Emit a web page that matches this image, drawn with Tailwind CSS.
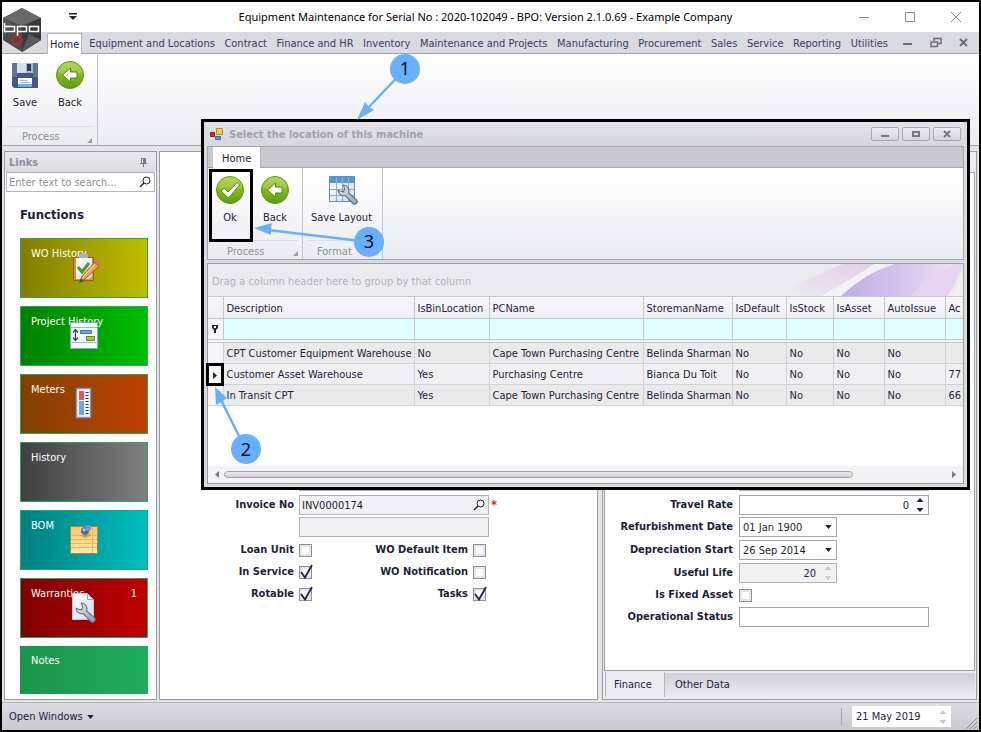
<!DOCTYPE html>
<html lang="en">
<head>
    <meta charset="UTF-8">
    <meta name="viewport" content="width=device-width, initial-scale=1.0">
    <title>Equipment Maintenance - BPO</title>
    <script src="https://cdn.jsdelivr.net/npm/@tailwindcss/browser@4"></script>
</head>
<body class="relative flex flex-col min-h-screen overflow-hidden border-2 border-black bg-[#e4e4e9] font-['DejaVu_Sans_Condensed','DejaVu_Sans',sans-serif] text-[11px] leading-[14px] text-[#1e1e3a]">

    <!-- Shared icons -->
    <svg class="absolute h-0 w-0">
        <defs>
            <linearGradient id="green" x1="0" y1="0" x2="0" y2="1">
                <stop offset="0" stop-color="#a3d03c"/><stop offset="0.5" stop-color="#84bb1c"/><stop offset="1" stop-color="#5d9b10"/>
            </linearGradient>
            <linearGradient id="paper" x1="0" y1="0" x2="1" y2="1">
                <stop offset="0" stop-color="#ffffff"/><stop offset="1" stop-color="#cfdcf0"/>
            </linearGradient>
            <linearGradient id="steel" x1="0" y1="0" x2="1" y2="1">
                <stop offset="0" stop-color="#eef2f6"/><stop offset="1" stop-color="#8d9cb0"/>
            </linearGradient>
            <linearGradient id="note" x1="0" y1="0" x2="0" y2="1">
                <stop offset="0" stop-color="#fbc768"/><stop offset="1" stop-color="#fdebad"/>
            </linearGradient>
        </defs>
        <symbol id="i-save" viewBox="0 0 32 32">
            <path d="M3 4h26v25H5l-2-2z" fill="#45597a"/>
            <path d="M3 4h5v14H3zM24 4h5v14h-5z" fill="#5f7595"/>
            <path d="M8 4h16v10H8z" fill="#a9bbd2"/>
            <path d="M8 4h9v10H8z" fill="#d5dfec"/>
            <path d="M18 5h4v7h-4z" fill="#2c3c59"/>
            <path d="M9 19h14v9H9z" fill="#f4f9fe"/>
            <path d="M9 25h14v3H9z" fill="#63b3ea"/>
            <path d="M11 21.500h7M11 23.500h10" stroke="#9db4d0"/>
        </symbol>
        <symbol id="i-back" viewBox="0 0 32 32">
            <circle cx="16" cy="16" r="13.500" fill="url(#green)" stroke="#5c9413"/>
            <path d="M4 14a12 11 0 0 1 24 0q-12 4-24 0z" fill="#fff" opacity=".15"/>
            <path d="M8.500 16l8-7v4h6.500v6h-6.500v4z" fill="#fff" stroke="#53840f"/>
        </symbol>
        <symbol id="i-ok" viewBox="0 0 32 32">
            <circle cx="16" cy="16" r="13.500" fill="url(#green)" stroke="#5c9413"/>
            <path d="M4 14a12 11 0 0 1 24 0q-12 4-24 0z" fill="#fff" opacity=".15"/>
            <path d="M7 17l3-3 4 4 9-9.500 2.500 2.500L14.500 24z" fill="#fff" stroke="#53840f"/>
        </symbol>
        <symbol id="i-wrench" viewBox="0 0 20 20">
            <path d="M1 6a5.500 5.500 0 0 0 7 5l7 7.500a2.300 2.300 0 0 0 3.500-3.500L11 8.500A5.500 5.500 0 0 0 6 1l1.500 4L6 7.500 3.500 7z" fill="url(#steel)" stroke="#5f6f86"/>
        </symbol>
        <symbol id="i-layout" viewBox="0 0 32 32">
            <path d="M3.500 2.500h25v25h-25z" fill="url(#paper)" stroke="#7089b5"/>
            <path d="M4 3h24v6H4z" fill="#4b9bd8"/>
            <path d="M4 15.500h24M4 21.500h24M10.500 3v24M16.500 3v24M22.500 3v24" stroke="#8fa9d0"/>
            <use href="#i-wrench" x="11" y="10" width="21" height="21"/>
        </symbol>
        <symbol id="i-search" viewBox="0 0 12 12">
            <circle cx="7.500" cy="4.500" r="3.500" fill="none" stroke="currentColor"/>
            <path d="M5 7L1 11" stroke="currentColor" stroke-width="1.400"/>
        </symbol>
        <symbol id="i-spin" viewBox="0 0 8 14">
            <path d="M4 0l3.500 4h-7zM4 14l3.500-4h-7z" fill="currentColor"/>
        </symbol>
        <symbol id="i-down" viewBox="0 0 8 5">
            <path d="M0 0h8L4 5z" fill="currentColor"/>
        </symbol>
        <symbol id="i-check" viewBox="0 0 14 16">
            <path d="M2 8l4 5.500L13 1" fill="none" stroke="#24243f" stroke-width="1.800"/>
        </symbol>
        <symbol id="i-corner" viewBox="0 0 6 6">
            <path d="M6 0v6H0z" fill="#9a9aa4"/>
        </symbol>
    </svg>

    <!-- Title bar -->
    <header class="flex h-[30px] items-center bg-white">
        <button class="ml-[67px] text-black" aria-label="Customize toolbar">
            <svg class="h-2 w-2" viewBox="0 0 8 8"><path d="M0 0h8v1.500H0zM0 3h8L4 7z" fill="#222"/></svg>
        </button>
        <h1 class="flex-1 pl-9 text-center font-['Noto_Sans',sans-serif] text-[11px] font-normal text-black">Equipment Maintenance for Serial No : 2020-102049 - BPO: Version 2.1.0.69 - Example Company</h1>
        <div class="flex items-center gap-[34px] pr-[17px]">
            <button aria-label="Minimize"><svg class="h-3 w-3" viewBox="0 0 12 12"><path d="M1 6.500h10" stroke="#888"/></svg></button>
            <button aria-label="Maximize"><svg class="h-3 w-3" viewBox="0 0 12 12"><path d="M1.500 1.500h9v9h-9z" fill="none" stroke="#888"/></svg></button>
            <button aria-label="Close"><svg class="h-3 w-3" viewBox="0 0 12 12"><path d="M1 1l10 10M11 1L1 11" stroke="#888"/></svg></button>
        </div>
    </header>

    <!-- Ribbon tabs -->
    <nav class="flex h-[22px] items-end border-b border-[#a3a3ad] bg-[#dadae1] pl-[45px] text-[#3c3c5c]">
        <a href="#" class="-mb-px h-[21px] border-x border-t border-[#b5b5be] bg-white px-[2px] pt-1 text-[#1e1e3a]">Home</a>
        <div class="flex h-[21px] flex-1 items-center justify-between pt-[3px] pl-[7px]">
            <a href="#">Equipment and Locations</a>
            <a href="#">Contract</a>
            <a href="#">Finance and HR</a>
            <a href="#">Inventory</a>
            <a href="#">Maintenance and Projects</a>
            <a href="#">Manufacturing</a>
            <a href="#">Procurement</a>
            <a href="#">Sales</a>
            <a href="#">Service</a>
            <a href="#">Reporting</a>
            <a href="#">Utilities</a>
        </div>
        <div class="flex h-[21px] items-center gap-4 pr-[9px] pl-[14px]">
            <button aria-label="Minimize child"><svg class="h-3 w-3" viewBox="0 0 12 12"><path d="M1 7h9" stroke="#6c6c7e" stroke-width="2"/></svg></button>
            <button aria-label="Restore child"><svg class="h-3 w-3" viewBox="0 0 12 12"><path d="M4 4V1.500h7v5H8.500M1 5h6.500v4.500H1z" fill="none" stroke="#6c6c7e" stroke-width="1.500"/></svg></button>
            <button aria-label="Close child"><svg class="h-3 w-3" viewBox="0 0 12 12"><path d="M2 2l7 7M9 2L2 9" stroke="#6c6c7e" stroke-width="2"/></svg></button>
        </div>
    </nav>

    <!-- Ribbon -->
    <div class="flex h-[92px] border-b border-[#a3a3ad] bg-linear-to-b from-white to-[#ebecf0]">
        <div class="flex w-24 flex-col border-r border-[#c3c3cb] px-[5px]">
            <div class="flex flex-1 gap-[9px] pt-[5px]">
                <button class="flex w-9 flex-col items-center gap-[5px]"><svg class="h-8 w-8"><use href="#i-save"/></svg>Save</button>
                <button class="flex w-9 flex-col items-center gap-[5px]"><svg class="h-8 w-8"><use href="#i-back"/></svg>Back</button>
            </div>
            <div class="flex h-[19px] items-center justify-between border-t border-[#dcdce2] pt-px pl-[15px] text-[#8e8e9b]">
                Process<svg class="mt-2 h-[5px] w-[5px]"><use href="#i-corner"/></svg>
            </div>
        </div>
    </div>

    <!-- Work area -->
    <main class="flex flex-1 gap-[2px] px-[2px] pt-[5px] pb-[2px]">
        <aside class="flex w-[153px] flex-col border border-[#9c9ca8] bg-white">
            <div class="flex h-5 items-center justify-between bg-linear-to-b from-[#e9e9ed] to-[#dcdce2] pt-px pr-2 pl-1 font-bold text-[#8e8e9b]">
                Links
                <svg class="h-[9px] w-[9px]" viewBox="0 0 9 9"><path d="M2 0h5v5h1v1H1V5h1zM4 6h1v3H4z" fill="#77778a"/><path d="M3 1h1v4H3z" fill="#fff"/></svg>
            </div>
            <label class="mx-px flex h-5 items-center border border-[#b4b4be] bg-white pr-[3px]">
                <input type="text" aria-label="Search links" placeholder="Enter text to search..." class="w-full min-w-0 flex-1 pt-px pl-[2px] outline-none placeholder:text-[#8c8c98]">
                <svg class="h-3 w-3"><use href="#i-search"/></svg>
            </label>
            <h2 class="px-[15px] pt-4 pb-4 text-[13px] leading-[14px] font-bold">Functions</h2>
            <div class="flex flex-col gap-2 px-[15px] text-white">
                <a href="#" class="relative h-[60px] w-32 border border-[#1faa5c] bg-linear-to-r from-[#827d00] to-[#bfbf00] px-[10px] py-2">WO History
                    <svg class="absolute top-[14px] left-[49px] h-8 w-8" viewBox="0 0 32 32">
                        <path d="M3.500 4.500h20v23h-20z" fill="#e08a3c" stroke="#a85a1e"/>
                        <path d="M6 5h16v19l-3 2H6z" fill="url(#paper)"/>
                        <path d="M9 1h9v4H9z" fill="#9fb2d2"/>
                        <path d="M8 14l4 5 7-9" fill="none" stroke="#4f9a2a" stroke-width="3"/>
                        <path d="M10 29l2-6L25 9l4 4-14 13z" fill="#f6a545" stroke="#a5551d"/>
                        <path d="M24 10l2-2q4 0 4 4l-2 2z" fill="#e26a62"/>
                        <path d="M9 30l2-5 3 3z" fill="#46506c"/>
                        <path d="M13 24L25 11" stroke="#ffdf9c"/>
                    </svg>
                </a>
                <a href="#" class="relative h-[60px] w-32 border border-[#1faa5c] bg-linear-to-r from-[#008000] to-[#00bf00] px-[10px] py-2">Project History
                    <svg class="absolute top-[13px] left-[47px] h-8 w-8" viewBox="0 0 32 32">
                        <path d="M2.500 2.500h27v26h-27z" fill="#f6f9fe" stroke="#8ea5cc"/>
                        <path d="M2 7.500h28M2 22.500h28" stroke="#9fb6da"/>
                        <path d="M7.500 10v10M5 12.500l2.500-3 2.500 3M5 17.500l2.500 3 2.500-3" fill="none" stroke="#3a4664" stroke-width="1.300"/>
                        <path d="M12.500 10.500h11v3h-11z" fill="#5fb0e0" stroke="#3d79a8"/>
                        <path d="M18.500 16.500h8v4h-8z" fill="#a2c93f" stroke="#668a1d"/>
                    </svg>
                </a>
                <a href="#" class="relative h-[60px] w-32 border border-[#1faa5c] bg-linear-to-r from-[#804000] to-[#bf4000] px-[10px] py-2">Meters
                    <svg class="absolute top-[12px] left-[47px] h-8 w-8" viewBox="0 0 32 32">
                        <path d="M8.500 1.500h14v29h-14z" fill="#f4f7fd" stroke="#7e98c8" stroke-width="1.500"/>
                        <path d="M11 4h5v9h-5z" fill="#e2574f"/>
                        <path d="M11 14h5v14h-5z" fill="#6aa8e0"/>
                        <path d="M17.500 5.500h3M17.500 8.500h3M17.500 11.500h3M17.500 14.500h3M17.500 17.500h3M17.500 20.500h3M17.500 23.500h3M17.500 26.500h3" stroke="#2c3550"/>
                    </svg>
                </a>
                <a href="#" class="relative h-[60px] w-32 border border-[#1faa5c] bg-linear-to-r from-[#404040] to-[#808080] px-[10px] py-2">History</a>
                <a href="#" class="relative h-[60px] w-32 border border-[#1faa5c] bg-linear-to-r from-[#008080] to-[#00bfbf] px-[10px] py-2">BOM
                    <svg class="absolute top-[12px] left-[47px] h-8 w-8" viewBox="0 0 32 32">
                        <path d="M2.500 3.500h27v27h-27z" fill="url(#note)" stroke="#b9813a"/>
                        <path d="M3 12.500h26M3 16.500h26M3 20.500h26M3 24.500h26M24.500 5v25" stroke="#e8b860"/>
                        <path d="M11 12h9l2-2v3l-5 2z" fill="#b07a35" opacity=".6"/>
                        <circle cx="17" cy="8" r="4" fill="#3f6fb0"/>
                        <circle cx="20" cy="5" r="3" fill="#6b97d0"/>
                        <circle cx="16" cy="7" r="1.500" fill="#a9c8ee"/>
                    </svg>
                </a>
                <a href="#" class="relative flex h-[60px] w-32 justify-between border border-[#1faa5c] bg-linear-to-r from-[#800000] to-[#bf0000] px-[10px] py-2">
                    <span>Warranties</span><span>1</span>
                    <svg class="absolute top-[12px] left-[47px] h-8 w-8" viewBox="0 0 32 32">
                        <path d="M4.500 2.500h15l6 6v20h-21z" fill="url(#paper)" stroke="#b9c8e2"/>
                        <path d="M19.500 3v5.500h5.500z" fill="#fff" stroke="#8ea5cc"/>
                        <use href="#i-wrench" x="7" y="11" width="21" height="21"/>
                    </svg>
                </a>
                <a href="#" class="h-12 w-32 bg-linear-to-r from-[#1a944a] to-[#1fad5c] px-[11px] py-2">Notes</a>
            </div>
        </aside>

        <!-- General details -->
        <section class="flex-1 border border-[#9c9ca8] bg-white pt-[319px]">
            <div class="grid grid-cols-[134px_190px_1fr] items-center gap-x-[5px] gap-y-[2px]">
                <span></span>
                <input type="text" aria-label="Order No" readonly class="h-5 w-full border border-[#b0b0ba] bg-[#f2f2f4] outline-none">
                <span></span>
                <span></span><span></span><span></span>
                <label for="invoice" class="text-right font-bold">Invoice No</label>
                <div class="flex h-5 items-center border border-[#b0b0ba] bg-[#f2f2f4] pr-[3px]">
                    <input id="invoice" type="text" value="INV0000174" class="min-w-0 flex-1 pt-px pl-[2px] outline-none">
                    <svg class="h-3 w-3"><use href="#i-search"/></svg>
                </div>
                <span class="-ml-[3px] text-[13px] font-bold text-[#f01818]">*</span>
                <span></span>
                <input type="text" aria-label="Invoice description" readonly class="h-5 w-full border border-[#b0b0ba] bg-[#f2f2f4] outline-none">
            </div>
            <div class="mt-[2px] grid grid-cols-[134px_14px_150px_14px] items-center gap-x-[5px] text-right font-bold">
                <label for="loan" class="leading-[22px]">Loan Unit</label>
                <input id="loan" type="checkbox" class="h-[13px] w-[13px] appearance-none border border-[#8f8f9e] bg-white shadow-[inset_0_0_0_2px_#e4e4ea]">
                <label for="wodefault">WO Default Item</label>
                <input id="wodefault" type="checkbox" class="h-[13px] w-[13px] appearance-none border border-[#8f8f9e] bg-white shadow-[inset_0_0_0_2px_#e4e4ea]">
                <label for="inservice" class="leading-[22px]">In Service</label>
                <span class="relative flex">
                    <input id="inservice" type="checkbox" checked class="peer h-[13px] w-[13px] appearance-none border border-[#8f8f9e] bg-white shadow-[inset_0_0_0_2px_#e4e4ea]">
                    <svg class="pointer-events-none absolute -top-[2px] left-0 hidden h-4 w-[14px] peer-checked:block"><use href="#i-check"/></svg>
                </span>
                <label for="wonotify">WO Notification</label>
                <input id="wonotify" type="checkbox" class="h-[13px] w-[13px] appearance-none border border-[#8f8f9e] bg-white shadow-[inset_0_0_0_2px_#e4e4ea]">
                <label for="rotable" class="leading-[22px]">Rotable</label>
                <span class="relative flex">
                    <input id="rotable" type="checkbox" checked class="peer h-[13px] w-[13px] appearance-none border border-[#8f8f9e] bg-white shadow-[inset_0_0_0_2px_#e4e4ea]">
                    <svg class="pointer-events-none absolute -top-[2px] left-0 hidden h-4 w-[14px] peer-checked:block"><use href="#i-check"/></svg>
                </span>
                <label for="tasks">Tasks</label>
                <span class="relative flex">
                    <input id="tasks" type="checkbox" checked class="peer h-[13px] w-[13px] appearance-none border border-[#8f8f9e] bg-white shadow-[inset_0_0_0_2px_#e4e4ea]">
                    <svg class="pointer-events-none absolute -top-[2px] left-0 hidden h-4 w-[14px] peer-checked:block"><use href="#i-check"/></svg>
                </span>
            </div>
        </section>

        <!-- Finance details -->
        <section class="ml-[2px] flex w-[375px] flex-col border border-[#9c9ca8] bg-[#ebecef] px-px pt-5">
            <div class="flex-1 border border-[#9c9ca8] bg-white pt-[298px]">
                <div class="grid grid-cols-[128px_190px] items-center gap-x-[6px] gap-y-[2px]">
                    <span></span>
                    <input type="text" aria-label="Running rate" class="h-5 w-full border border-[#b0b0ba] outline-none">
                    <span></span><span></span>
                    <label for="travel" class="text-right font-bold">Travel Rate</label>
                    <div class="flex h-5 items-center gap-[7px] border border-[#a3a3ae] pr-1">
                        <input id="travel" type="text" value="0" class="min-w-0 flex-1 pt-px text-right outline-none">
                        <svg class="h-[14px] w-2"><use href="#i-spin"/></svg>
                    </div>
                </div>
                <div class="mt-[2px] grid grid-cols-[128px_98px] items-center gap-x-[6px] gap-y-[3px]">
                    <label for="refurb" class="text-right font-bold">Refurbishment Date</label>
                    <div class="relative">
                        <select id="refurb" class="block h-5 w-full appearance-none border border-[#a3a3ae] pt-px pl-[3px] outline-none"><option>01 Jan 1900</option></select>
                        <svg class="pointer-events-none absolute top-2 right-[5px] h-1 w-[7px]"><use href="#i-down"/></svg>
                    </div>
                    <label for="deprec" class="text-right font-bold">Depreciation Start</label>
                    <div class="relative">
                        <select id="deprec" class="block h-5 w-full appearance-none border border-[#a3a3ae] pt-px pl-[3px] outline-none"><option>26 Sep 2014</option></select>
                        <svg class="pointer-events-none absolute top-2 right-[5px] h-1 w-[7px]"><use href="#i-down"/></svg>
                    </div>
                    <label for="life" class="text-right font-bold">Useful Life</label>
                    <div class="flex h-5 items-center gap-2 border border-[#b0b0ba] bg-[#f2f2f4] pr-1">
                        <input id="life" type="text" value="20" class="min-w-0 flex-1 pt-px text-right outline-none">
                        <svg class="h-[14px] w-2 text-[#c9c9d0]"><use href="#i-spin"/></svg>
                    </div>
                </div>
                <div class="mt-[2px] grid grid-cols-[128px_190px] items-center gap-x-[6px] gap-y-[2px]">
                    <label for="fixed" class="text-right leading-[20px] font-bold">Is Fixed Asset</label>
                    <input id="fixed" type="checkbox" class="h-[13px] w-[13px] appearance-none border border-[#8f8f9e] bg-white shadow-[inset_0_0_0_2px_#e4e4ea]">
                    <label for="opstatus" class="text-right font-bold">Operational Status</label>
                    <input id="opstatus" type="text" class="h-5 w-full border border-[#a3a3ae] outline-none">
                </div>
            </div>
            <div class="flex h-7 items-stretch">
                <button class="mt-px mb-[2px] ml-px w-[60px] border-r border-l border-[#b4b4be] bg-[#ebecef] pr-1">Finance</button>
                <button class="mt-[2px] mb-[2px] flex-1 bg-linear-to-b from-[#cfcfd6] to-[#ebecef] pl-[10px] text-left">Other Data</button>
            </div>
        </section>
    </main>

    <!-- Status bar -->
    <footer class="flex h-7 items-center justify-between border-t border-[#b4b4be] bg-linear-to-b from-[#dcdce2] to-[#c9c9d1] pl-[7px]">
        <button class="flex items-center gap-1 pt-px">Open Windows <svg class="h-1 w-[7px]"><use href="#i-down"/></svg></button>
        <div class="flex h-full items-center gap-[10px]">
            <div class="h-[18px] border-l border-[#a8a8b2]"></div>
            <div class="mr-1 flex h-[21px] w-[99px] items-center bg-white pr-1">
                <input type="text" aria-label="Current date" value="21 May 2019" class="min-w-0 flex-1 pt-px pl-1 outline-none">
                <svg class="h-[14px] w-2 text-[#c9c9d0]"><use href="#i-spin"/></svg>
            </div>
            <svg class="mt-3 mr-[2px] h-3 w-3" viewBox="0 0 12 12"><path d="M1 12L12 1M5 12l7-7M9 12l3-3" stroke="#8f8f9a"/></svg>
        </div>
    </footer>

    <!-- Location dialog -->
    <div role="dialog" aria-labelledby="dialog-title" class="absolute top-[117px] right-[9px] left-[199px] flex h-[371px] flex-col border-3 border-black bg-[#dadae1] px-[3px] pb-[3px]">
        <div class="flex h-6 items-center bg-linear-to-b from-[#e2e2e8] to-[#d6d6dd] pr-[3px] pl-[3px]">
            <svg class="h-[13px] w-[13px]" viewBox="0 0 13 13">
                <path d="M.5 4.500h4v4h-4z" fill="#c8372c" stroke="#8a1a12"/>
                <path d="M6.500 .5h6v6h-6z" fill="#f9c93e" stroke="#c38a18"/>
                <path d="M5.500 8.500h5v3h-5z" fill="#5d93e8" stroke="#3c68b8"/>
            </svg>
            <h2 id="dialog-title" class="flex-1 pt-px pl-[6px] font-bold text-[#a2a2ae]">Select the location of this machine</h2>
            <div class="flex gap-[3px]">
                <button aria-label="Minimize dialog" class="flex h-[14px] w-7 items-center justify-center rounded-xs border border-[#a6a6b2] bg-linear-to-b from-[#ececf0] to-[#d4d4dc]"><svg class="h-2 w-[10px]" viewBox="0 0 10 8"><path d="M1 6h8" stroke="#77778a" stroke-width="2"/></svg></button>
                <button aria-label="Maximize dialog" class="flex h-[14px] w-7 items-center justify-center rounded-xs border border-[#a6a6b2] bg-linear-to-b from-[#ececf0] to-[#d4d4dc]"><svg class="h-2 w-[10px]" viewBox="0 0 10 8"><path d="M2 2h6v4H2z" fill="none" stroke="#77778a" stroke-width="2"/></svg></button>
                <button aria-label="Close dialog" class="flex h-[14px] w-7 items-center justify-center rounded-xs border border-[#a6a6b2] bg-linear-to-b from-[#ececf0] to-[#d4d4dc]"><svg class="h-2 w-[10px]" viewBox="0 0 10 8"><path d="M2 1l6 6M8 1L2 7" stroke="#77778a" stroke-width="2"/></svg></button>
            </div>
        </div>
        <div class="flex h-[22px] items-end border border-[#a3a3ad] bg-[#c8c8ce] pl-[5px]">
            <a href="#" class="-mb-px h-[21px] border-r border-[#b5b5be] bg-white px-[9px] pt-[5px]">Home</a>
        </div>
        <div class="flex h-[92px] border-x border-b border-[#a3a3ad] bg-linear-to-b from-white to-[#ebecf0]">
            <div class="flex w-[95px] flex-col border-r border-[#c3c3cb] px-1">
                <div class="flex flex-1 gap-[9px] pt-[6px]">
                    <button class="flex w-9 flex-col items-center gap-[5px]"><svg class="h-8 w-8"><use href="#i-ok"/></svg>Ok</button>
                    <button class="flex w-9 flex-col items-center gap-[5px]"><svg class="h-8 w-8"><use href="#i-back"/></svg>Back</button>
                </div>
                <div class="flex h-[19px] items-center justify-between border-t border-[#dcdce2] pt-[3px] pl-[15px] text-[#8e8e9b]">
                    Process<svg class="mt-1 h-[5px] w-[5px]"><use href="#i-corner"/></svg>
                </div>
            </div>
            <div class="flex w-20 flex-col border-r border-[#c3c3cb] px-1">
                <button class="flex flex-1 flex-col items-center gap-[5px] pt-[6px] pr-[2px] whitespace-nowrap"><svg class="h-8 w-8"><use href="#i-layout"/></svg>Save Layout</button>
                <div class="flex h-[19px] items-center border-t border-[#dcdce2] pt-[3px] pl-[10px] text-[#8e8e9b]">Format</div>
            </div>
        </div>
        <div class="mt-[3px] flex flex-1 flex-col overflow-hidden border border-[#9c9ca8] bg-white">
            <div class="relative flex h-8 items-center bg-[#ebebed] pt-1 pl-1 text-[#b3b3b9]">
                Drag a column header here to group by that column
                <svg class="absolute top-0 right-0 h-8 w-[180px]" viewBox="0 0 180 32">
                    <defs>
                        <linearGradient id="pink" x1="0" y1="1" x2="1" y2="0"><stop offset="0" stop-color="#ebebed"/><stop offset="1" stop-color="#e6cdec"/></linearGradient>
                        <linearGradient id="violet" x1="0" y1="0" x2="1" y2="0"><stop offset="0" stop-color="#bcaee8"/><stop offset="0.5" stop-color="#d3c6f0"/><stop offset="1" stop-color="#ece4f3"/></linearGradient>
                    </defs>
                    <path d="M10 22Q50 4 60 0h32Q70 14 38 32H10z" fill="url(#pink)"/>
                    <path d="M92 0Q70 14 38 32h20Q84 8 112 0z" fill="#f3f3f5"/>
                    <path d="M58 32Q84 8 112 0h68q-4 14-16 32z" fill="url(#violet)"/>
                    <path d="M128 32q18-22 44-32h8q-4 14-16 32z" fill="#e6d3f0"/>
                    <path d="M168 32q8-12 12-24v24z" fill="#f1eef4"/>
                </svg>
            </div>
            <table class="w-full table-fixed border-collapse text-left whitespace-nowrap">
                <colgroup>
                    <col class="w-[15px]"><col class="w-[191px]"><col class="w-[75px]"><col class="w-[154px]"><col class="w-[89px]"><col class="w-[54px]"><col class="w-[47px]"><col class="w-[51px]"><col class="w-[61px]"><col>
                </colgroup>
                <thead id="grid-head" class="bg-linear-to-b from-[#f8f8f9] to-[#eeeef1]"></thead>
                <tbody id="grid-body"></tbody>
            </table>
            <div class="mt-auto flex h-[17px] items-center gap-[5px] bg-[#f3f3f5] px-[7px] text-[#77778a]">
                <svg class="h-[7px] w-1" viewBox="0 0 4 7"><path d="M4 0v7L0 3.500z" fill="currentColor"/></svg>
                <div class="flex-1"><div class="h-[7px] w-[87%] rounded-full border border-[#a3a3ae] bg-linear-to-b from-[#ececf0] to-[#d0d0d8]"></div></div>
                <svg class="h-[7px] w-1" viewBox="0 0 4 7"><path d="M0 0v7l4-3.500z" fill="currentColor"/></svg>
            </div>
        </div>
    </div>

    <!-- Callouts -->
    <svg class="pointer-events-none absolute -top-[2px] -left-[2px] h-[732px] w-[981px]">
        <path d="M210.500 170.500h41v70h-41z" fill="none" stroke="#000" stroke-width="3"/>
        <path d="M207.500 364.500h15v20h-15z" fill="none" stroke="#000" stroke-width="3"/>
        <g stroke="#66b0ff" stroke-width="2.500">
            <path d="M405 69L368 108M246 450L221 400M369 242L268 230"/>
        </g>
        <g fill="#66b0ff">
            <path d="M357 120l8-18 4 5 5 3zM215 387l1 18 5-3 6-4zM254 228l18-5-1 6 0 6z"/>
            <circle cx="405" cy="69" r="15"/>
            <circle cx="246" cy="449" r="15"/>
            <circle cx="369" cy="242" r="15"/>
        </g>
        <g class="font-['Open_Sans',sans-serif] text-[18px]" fill="#000" text-anchor="middle">
            <text x="405" y="75">1</text>
            <text x="246" y="456">2</text>
            <text x="369" y="248">3</text>
        </g>
    </svg>

    <!-- Application logo -->
    <svg class="absolute top-[6px] left-0 h-11 w-10" viewBox="0 0 40 44">
        <path d="M20 0l19 10v22L20 44 1 32V10z" fill="#4a4a4a"/>
        <path d="M20 0l19 10-19 8L1 10z" fill="#6a6a6a"/>
        <path d="M20 18l19-8v22L20 44z" fill="#3a3a3a"/>
        <path d="M1 10l9 6-9 14zM39 32l-12-6-7 18z" fill="#5a5a5a"/>
        <path d="M2.500 15v8.500h10v-5h-10M15.500 28v-9.500h9v5h-9M27.500 18.500h9v5h-9z" fill="none" stroke="#fff" stroke-width="1.500"/>
        <path d="M12 28.500h6l2 4-3 4h-4l-3-4z" fill="none" stroke="#d81e1e" stroke-width="1.500"/>
    </svg>

    <script>
        const columns = ["", "Description", "IsBinLocation", "PCName", "StoremanName", "IsDefault", "IsStock", "IsAsset", "AutoIssue", "Ac"];
        const rows = [
            ["", "CPT Customer Equipment Warehouse", "No", "Cape Town Purchasing Centre", "Belinda Sharman", "No", "No", "No", "No", ""],
            ["▸", "Customer Asset Warehouse", "Yes", "Purchasing Centre", "Bianca Du Toit", "No", "No", "No", "No", "77"],
            ["", "In Transit CPT", "Yes", "Cape Town Purchasing Centre", "Belinda Sharman", "No", "No", "No", "No", "66"]
        ];
        const pin = `<svg class="mx-auto h-2 w-[6px]" viewBox="0 0 6 8"><path d="M0 0h6v3L4 5v3H2V5L0 3z" fill="#24243f"/><path d="M2 1h2v2H2z" fill="#fff"/></svg>`;
        const marker = `<svg class="mx-auto h-[7px] w-1" viewBox="0 0 4 7"><path d="M0 0v7l4-3.500z" fill="#24243f"/></svg>`;

        // Column headers
        document.getElementById("grid-head").innerHTML = `<tr class="h-[22px]">${columns.map((c, i) =>
            `<th class="border-y border-r border-[#c6c6d0] p-0 pt-[2px] ${i ? "pl-[3px]" : ""} font-normal last:border-r-0">${c}</th>`).join("")}</tr>`;

        // Filter row, then the data rows
        const filterRow = `<tr class="h-[21px]">${columns.map((c, i) =>
            `<td class="border-r border-[#c6c6d0] p-0 last:border-r-0 ${i ? "bg-[#e0ffff]" : "bg-[#f5f5f7]"}">${i ? "" : pin}</td>`).join("")}</tr>
            <tr class="h-[3px]"><td colspan="10" class="border-y border-[#c6c6d0] bg-[#f5f5f7] p-0"></td></tr>`;
        document.getElementById("grid-body").innerHTML = filterRow + rows.map((row, r) =>
            `<tr class="h-[21px] ${r === 1 ? "bg-[#f0f0f2]" : "bg-[#eaeaeb]"}">${row.map((c, i) =>
                `<td class="border-r border-b border-[#d0d0d8] p-0 pt-[2px] last:border-r-0 ${i ? "pl-[3px]" : "bg-[#f5f5f7]"}">${c === "▸" ? marker : c}</td>`).join("")}</tr>`).join("");
    </script>
</body>
</html>
